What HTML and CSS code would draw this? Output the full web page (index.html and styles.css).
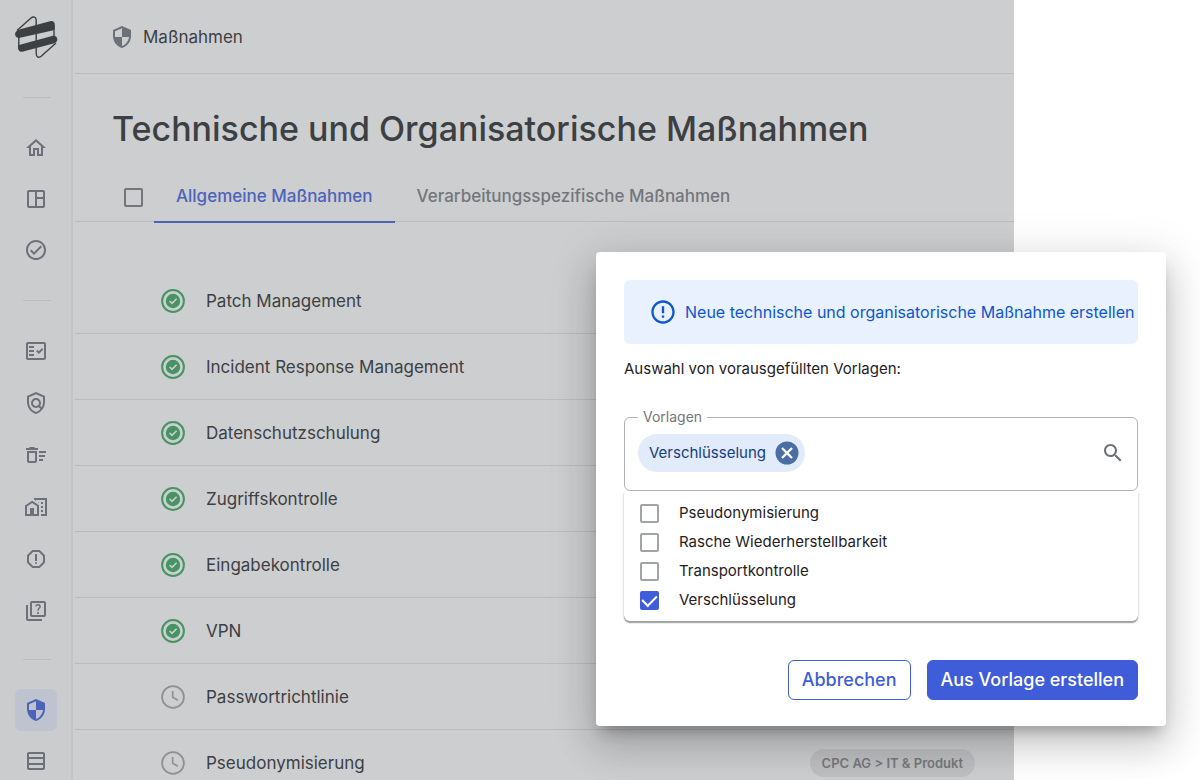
FILE: index.html
```html
<!DOCTYPE html>
<html lang="de">
<head>
<meta charset="utf-8">
<meta name="viewport" content="width=device-width, initial-scale=1">
<title>Technische und Organisatorische Maßnahmen</title>
<link rel="stylesheet" href="styles.css">
</head>
<body>
<svg class="sprite" aria-hidden="true">
  <symbol id="shield" viewBox="0 0 24 24"><path d="M12 1 3 5v6c0 5.55 3.84 10.74 9 12 5.160-1.260 9-6.450 9-12V5l-9-4zm0 10.990h7c-.53 4.120-3.280 7.790-7 8.940V12H5V6.300l7-3.110v8.800z"/></symbol>
  <symbol id="done" viewBox="0 0 24 24"><circle cx="12" cy="12" r="10.9" fill="none" stroke="currentColor" stroke-width="2"/><circle cx="12" cy="12" r="7.2"/><path d="m8.6 12 2.4 2.4 4.6-4.7" fill="none" stroke="#cdced0" stroke-width="1.6"/></symbol>
  <symbol id="pending" viewBox="0 0 24 24"><circle cx="12" cy="12" r="10.9" fill="none" stroke="currentColor" stroke-width="1.8"/><path d="M11.700 6v6.300l5.200 3" fill="none" stroke="currentColor" stroke-width="1.7"/></symbol>
</svg>

<div class="app">
  <nav class="sidebar" aria-label="Hauptnavigation">
    <a class="logo" href="#" aria-label="Startseite">
      <svg viewBox="0 0 44 44"><path d="M3 15.500 17 3c2.500-2 5.200-.8 5.200 2.200V38.500c0 3.800 2.700 4.700 5 2.800L42 28M4.800 20v14M40 10v13" fill="none" stroke="currentColor" stroke-width="1.4"/><path d="M8 13.700 36 6.300c3-.8 4.700.7 4.700 3.300v3.400c0 1.400-.9 2.300-2.200 2.600L6 22.700C2.800 23.500 1.100 21.500 1.100 19.100c0-2.900 2.900-4.400 6.900-5.400z"/><path d="M4.200 31.800c0-1.100.6-1.800 1.700-2.100L38 20.900c3.200-.8 5.300.9 5.300 3.500 0 1.900-1.200 3.300-3.900 4L9.200 36.600c-3.300.8-5-.6-5-3z"/></svg>
    </a>
    <hr class="rule">
    <div class="group">
      <a class="item" href="#" aria-label="Start"><svg viewBox="0 0 24 24"><path d="m12 5.690 5 4.500V18h-2v-6H9v6H7v-7.810l5-4.500M12 3 2 12h3v8h6v-6h2v6h6v-8h3L12 3z"/></svg></a>
      <a class="item" href="#" aria-label="Dashboard"><svg viewBox="0 0 24 24"><path d="M19 3H5c-1.100 0-2 .9-2 2v14c0 1.100.9 2 2 2h14c1.100 0 2-.9 2-2V5c0-1.100-.9-2-2-2zM5 19V5h6v14H5zm14 0h-6v-7h6v7zm0-9h-6V5h6v5z"/></svg></a>
      <a class="item" href="#" aria-label="Aufgaben"><svg viewBox="0 0 24 24"><path d="M12 2C6.480 2 2 6.480 2 12s4.480 10 10 10 10-4.480 10-10S17.520 2 12 2zm0 18c-4.410 0-8-3.590-8-8s3.590-8 8-8 8 3.590 8 8-3.590 8-8 8zm4.590-12.420L10 14.170l-2.590-2.580L6 13l4 4 8-8z"/></svg></a>
    </div>
    <hr class="rule">
    <div class="group group-wide">
      <a class="item" href="#" aria-label="Prüfungen"><svg viewBox="0 0 24 24"><path fill-rule="evenodd" d="M20 3H4c-1.100 0-2 .9-2 2v14c0 1.100.9 2 2 2h16c1.100 0 2-.9 2-2V5c0-1.100-.9-2-2-2zm0 16H4V5h16v14z"/><path d="m19.410 10.420-1.410-1.420-3.170 3.170-1.410-1.420L12 12.160 14.820 15zM5 7h5v2H5zM5 11h5v2H5zM5 15h5v2H5z"/></svg></a>
      <a class="item" href="#" aria-label="Richtlinien"><svg viewBox="0 0 24 24"><path d="M12 1 3 5v6c0 5.550 3.840 10.740 9 12 5.160-1.260 9-6.450 9-12V5l-9-4zm7 10c0 1.850-.51 3.650-1.380 5.210l-1.450-1.450c1.290-1.940 1.070-4.580-.64-6.290-1.950-1.950-5.120-1.950-7.070 0-1.950 1.950-1.950 5.120 0 7.070 1.710 1.710 4.350 1.920 6.290.64l1.720 1.720c-1.190 1.420-2.730 2.510-4.470 3.040-4.020-1.250-7-5.420-7-9.940V6.300l7-3.110 7 3.110V11zm-7 4c-1.660 0-3-1.340-3-3s1.340-3 3-3 3 1.340 3 3-1.340 3-3 3z"/></svg></a>
      <a class="item" href="#" aria-label="Löschkonzept"><svg viewBox="0 0 24 24"><path d="M15 16h4v2h-4zm0-8h7v2h-7zm0 4h6v2h-6zM3 18c0 1.100.9 2 2 2h6c1.100 0 2-.9 2-2V8H3v10zm2-8h6v8H5v-8zm5-6H6L5 5H2v2h12V5h-3z"/></svg></a>
      <a class="item" href="#" aria-label="Standorte"><svg viewBox="0 0 24 24"><path d="M17 15h2v2h-2zM17 11h2v2h-2zM17 7h2v2h-2zM13.740 7l1.260.84V7z"/><path d="M10 3v1.510l2 1.330V5h9v14h-4v2h6V3z"/><path d="M8.170 5.700 15 10.250V21H1V10.480L8.170 5.700zM10 19h3v-7.840L8.170 8.090 3 11.380V19h3v-6h4v6z"/></svg></a>
      <a class="item" href="#" aria-label="Vorfälle"><svg viewBox="0 0 24 24"><path d="M15.730 3H8.270L3 8.270v7.460L8.270 21h7.460L21 15.730V8.270L15.730 3zM19 14.900 14.900 19H9.100L5 14.900V9.100L9.100 5h5.800L19 9.100v5.800z"/><circle cx="12" cy="16" r="1"/><path d="M11 7h2v7h-2z"/></svg></a>
      <a class="item" href="#" aria-label="Fragebögen"><svg viewBox="0 0 24 24"><path d="M4 6H2v14c0 1.100.9 2 2 2h14v-2H4V6zm16-4H8c-1.100 0-2 .9-2 2v12c0 1.100.9 2 2 2h12c1.100 0 2-.9 2-2V4c0-1.100-.9-2-2-2zm0 14H8V4h12v12zm-6.490-5.840c.41-.73 1.180-1.160 1.630-1.800.48-.68.21-1.940-1.140-1.940-.88 0-1.320.67-1.500 1.230l-1.370-.57C11.510 5.960 12.520 5 13.990 5c1.230 0 2.080.56 2.510 1.260.37.600.58 1.730.01 2.570-.63.93-1.230 1.210-1.560 1.810-.13.24-.18.400-.18 1.180h-1.520c.01-.41-.06-1.080.26-1.660zm-.56 3.790c0-.59.470-1.040 1.050-1.040.590 0 1.040.45 1.040 1.040 0 .58-.44 1.050-1.040 1.050-.58 0-1.050-.47-1.050-1.050z"/></svg></a>
    </div>
    <hr class="rule">
    <div class="group">
      <a class="item item-active" href="#" aria-label="Maßnahmen" aria-current="page"><svg><use href="#shield"/></svg></a>
      <a class="item" href="#" aria-label="Verzeichnis"><svg viewBox="0 0 24 24"><path d="M19 3H5c-1.100 0-2 .9-2 2v14c0 1.100.9 2 2 2h14c1.100 0 2-.9 2-2V5c0-1.100-.9-2-2-2zm0 2v3H5V5h14zm0 5v4H5v-4h14zM5 19v-3h14v3H5z"/></svg></a>
    </div>
  </nav>

  <main class="main">
    <header class="topbar"><svg><use href="#shield"/></svg><span>Maßnahmen</span></header>
    <h1 class="title">Technische und Organisatorische Maßnahmen</h1>
    <div class="tabs">
      <input class="check check-muted" type="checkbox" aria-label="Alle auswählen">
      <button class="tab tab-active" type="button">Allgemeine Maßnahmen</button>
      <button class="tab" type="button">Verarbeitungsspezifische Maßnahmen</button>
    </div>
    <ul class="list">
      <li class="row"><svg class="done"><use href="#done"/></svg><span>Patch Management</span></li>
      <li class="row"><svg class="done"><use href="#done"/></svg><span>Incident Response Management</span></li>
      <li class="row"><svg class="done"><use href="#done"/></svg><span>Datenschutzschulung</span></li>
      <li class="row"><svg class="done"><use href="#done"/></svg><span>Zugriffskontrolle</span></li>
      <li class="row"><svg class="done"><use href="#done"/></svg><span>Eingabekontrolle</span></li>
      <li class="row"><svg class="done"><use href="#done"/></svg><span>VPN</span></li>
      <li class="row"><svg class="pending"><use href="#pending"/></svg><span>Passwortrichtlinie</span></li>
      <li class="row"><svg class="pending"><use href="#pending"/></svg><span>Pseudonymisierung</span><span class="tag">CPC AG &gt; IT &amp; Produkt</span></li>
    </ul>
  </main>
</div>

<form class="dialog" role="dialog" aria-labelledby="dialog-title">
  <div class="banner">
    <svg viewBox="0 0 24 24"><path d="M11 15h2v2h-2zm0-8h2v6h-2zm.990-5C6.470 2 2 6.480 2 12s4.470 10 9.990 10C17.520 22 22 17.520 22 12S17.520 2 11.990 2zM12 20c-4.420 0-8-3.580-8-8s3.580-8 8-8 8 3.580 8 8-3.580 8-8 8z"/></svg>
    <span id="dialog-title">Neue technische und organisatorische Maßnahme erstellen</span>
  </div>
  <p class="hint">Auswahl von vorausgefüllten Vorlagen:</p>
  <fieldset class="field">
    <legend><label for="search">Vorlagen</label></legend>
    <div class="field-body">
      <span class="chip">Verschlüsselung
        <button class="chip-x" type="button" aria-label="Verschlüsselung entfernen"><svg viewBox="0 0 24 24"><circle cx="12" cy="12" r="11.500" fill="#4a6da3"/><path d="m7 7 10 10M17 7 7 17" stroke="#fff" stroke-width="2.400"/></svg></button>
      </span>
      <input class="search" id="search" type="text">
      <button class="search-go" type="button" aria-label="Suchen"><svg viewBox="0 0 24 24"><path d="M15.500 14h-.790l-.280-.270C15.410 12.590 16 11.110 16 9.500 16 5.910 13.090 3 9.500 3S3 5.910 3 9.500 5.910 16 9.500 16c1.610 0 3.090-.590 4.230-1.570l.270.280v.790l5 4.990L20.490 19l-4.990-5zm-6 0C7.010 14 5 11.990 5 9.500S7.010 5 9.500 5 14 7.010 14 9.500 11.990 14 9.500 14z"/></svg></button>
    </div>
  </fieldset>
  <div class="options">
    <label class="option"><input class="check" type="checkbox">Pseudonymisierung</label>
    <label class="option"><input class="check" type="checkbox">Rasche Wiederherstellbarkeit</label>
    <label class="option"><input class="check" type="checkbox">Transportkontrolle</label>
    <label class="option"><input class="check" type="checkbox" checked>Verschlüsselung</label>
  </div>
  <div class="actions">
    <button class="btn btn-outline" type="button">Abbrechen</button>
    <button class="btn btn-fill" type="submit">Aus Vorlage erstellen</button>
  </div>
</form>
</body>
</html>
```
FILE: styles.css
```css
* { box-sizing: border-box; }
body {
  margin: 0;
  height: 100vh;
  overflow: hidden;
  background: #fff;
  color: #3c4043;
  font-family: Inter, "Liberation Sans", sans-serif;
  font-size: 17px;
  line-height: 24px;
}
svg { display: block; flex: none; width: 24px; height: 24px; fill: currentColor; }
button, input { font: inherit; color: inherit; }
button { padding: 0; border: 0; background: none; cursor: pointer; }
.sprite { position: absolute; width: 0; height: 0; }

.app { display: flex; width: 84.5%; height: 100vh; overflow: hidden; background: #cdced0; }

.sidebar {
  display: flex;
  flex: none;
  flex-direction: column;
  align-items: center;
  width: 73px;
  padding-top: 15px;
  border-right: 2px solid #c2c4c8;
  background: #cacccd;
  color: #6e7079;
}
.logo { color: #3c4043; }
.logo svg { width: 44px; height: 44px; }
.rule { flex: none; width: 28px; height: 1px; margin: 38px 0 29px 3px; border: 0; background: #babcc0; }
.rule ~ .rule { margin-top: 29px; }
.group { display: grid; flex: none; gap: 9px; }
.group-wide { gap: 10px; }
.group-wide + .rule { margin-top: 27px; }
.item {
  display: grid;
  place-items: center;
  width: 42px;
  height: 42px;
  border-radius: 6px;
  color: inherit;
}
.item-active { background: #bfc3d0; color: #4d63b8; }

.main { flex: 1; min-width: 0; padding-left: 2px; }
.topbar {
  display: flex;
  align-items: center;
  gap: 9px;
  height: 74px;
  padding-left: 35px;
  border-bottom: 1px solid #b9bbbf;
}
.topbar svg { color: #6e7079; }
.title { margin: 0; padding: 35px 0 24px 37px; font-size: 34px; line-height: 40px; font-weight: 500; white-space: nowrap; }
.tabs { display: flex; align-items: center; height: 49px; padding-left: 49px; border-bottom: 1px solid #b9bbbf; }
.tab { height: 51px; padding: 0 22px; border-bottom: 2px solid transparent; color: #74767b; font-weight: 500; white-space: nowrap; }
.tab-active { margin-left: 11px; border-color: #4d63b8; color: #4d63b8; }

.list { margin: 0; padding: 46px 0 0; list-style: none; }
.row { display: flex; align-items: center; gap: 21px; height: 66px; padding: 0 39px 0 86px; border-bottom: 1px solid #b9bbbf; }
.row svg { overflow: visible; }
.done { color: #469463; }
.pending { color: #8f9193; }
.tag { margin-left: auto; padding: 2px 12px; border-radius: 14px; background: rgba(0, 0, 0, .07); color: #77797b; font-size: 13px; font-weight: 600; }

.check {
  appearance: none;
  display: grid;
  place-items: center;
  flex: none;
  width: 19px;
  height: 19px;
  margin: 0;
  border: 2px solid #a0a4a3;
  border-radius: 2px;
}
.check-muted { border-color: #74767b; }
.check:checked { border-color: #3f5dd8; background: #3f5dd8; }
.check:checked::after {
  content: "";
  width: 7px;
  height: 12px;
  margin-bottom: 3px;
  border: solid #fff;
  border-width: 0 2px 2px 0;
  transform: translateY(-1px) rotate(45deg);
}

.dialog {
  position: absolute;
  top: 252px;
  right: 34px;
  width: 570px;
  padding: 28px 28px 26px;
  border-radius: 4px;
  background: #fff;
  box-shadow: 0 10px 14px -6px rgba(0, 0, 0, .28), 0 20px 38px 3px rgba(0, 0, 0, .14), 0 8px 46px 8px rgba(0, 0, 0, .09);
  color: #1f2124;
  font-size: 15px;
}
.banner { display: flex; align-items: center; gap: 8px; height: 64px; padding-left: 25px; border-radius: 6px; background: #e9f0fe; color: #0f57d0; font-size: 16px; white-space: nowrap; }
.banner svg { width: 28px; height: 28px; }
.hint { margin: 13px 0 28px; }
.field { margin: 0; padding: 0 12px 18px 13px; border: 1px solid #b0b2bc; border-radius: 6px; }
.field legend { padding: 0 5px; color: #74767d; font-size: 14px; line-height: 16px; }
.field-body { display: flex; align-items: center; margin-top: 9px; }
.chip { display: flex; align-items: center; gap: 9px; height: 38px; padding: 0 6px 0 11px; border-radius: 19px; background: #e1ebf9; color: #153e83; }
.search { flex: 1; min-width: 0; border: 0; outline: 0; background: none; }
.search-go { color: #6e7079; }
.options { display: grid; gap: 5px; padding: 10px 16px 9px; border-radius: 0 0 6px 6px; box-shadow: 0 2px 1px #a0a4a3, 0 1px 3px rgba(0, 0, 0, .2); clip-path: inset(2px -4px -6px); }
.option { display: flex; align-items: center; gap: 20px; }
.actions { display: flex; justify-content: flex-end; gap: 16px; margin-top: 39px; }
.btn { height: 40px; padding: 0 13px; border: 1px solid #3f5dd8; border-radius: 6px; color: #3f5dd8; font-size: 18px; font-weight: 500; }
.btn-fill { background: #3f5dd8; color: #fff; }
```
